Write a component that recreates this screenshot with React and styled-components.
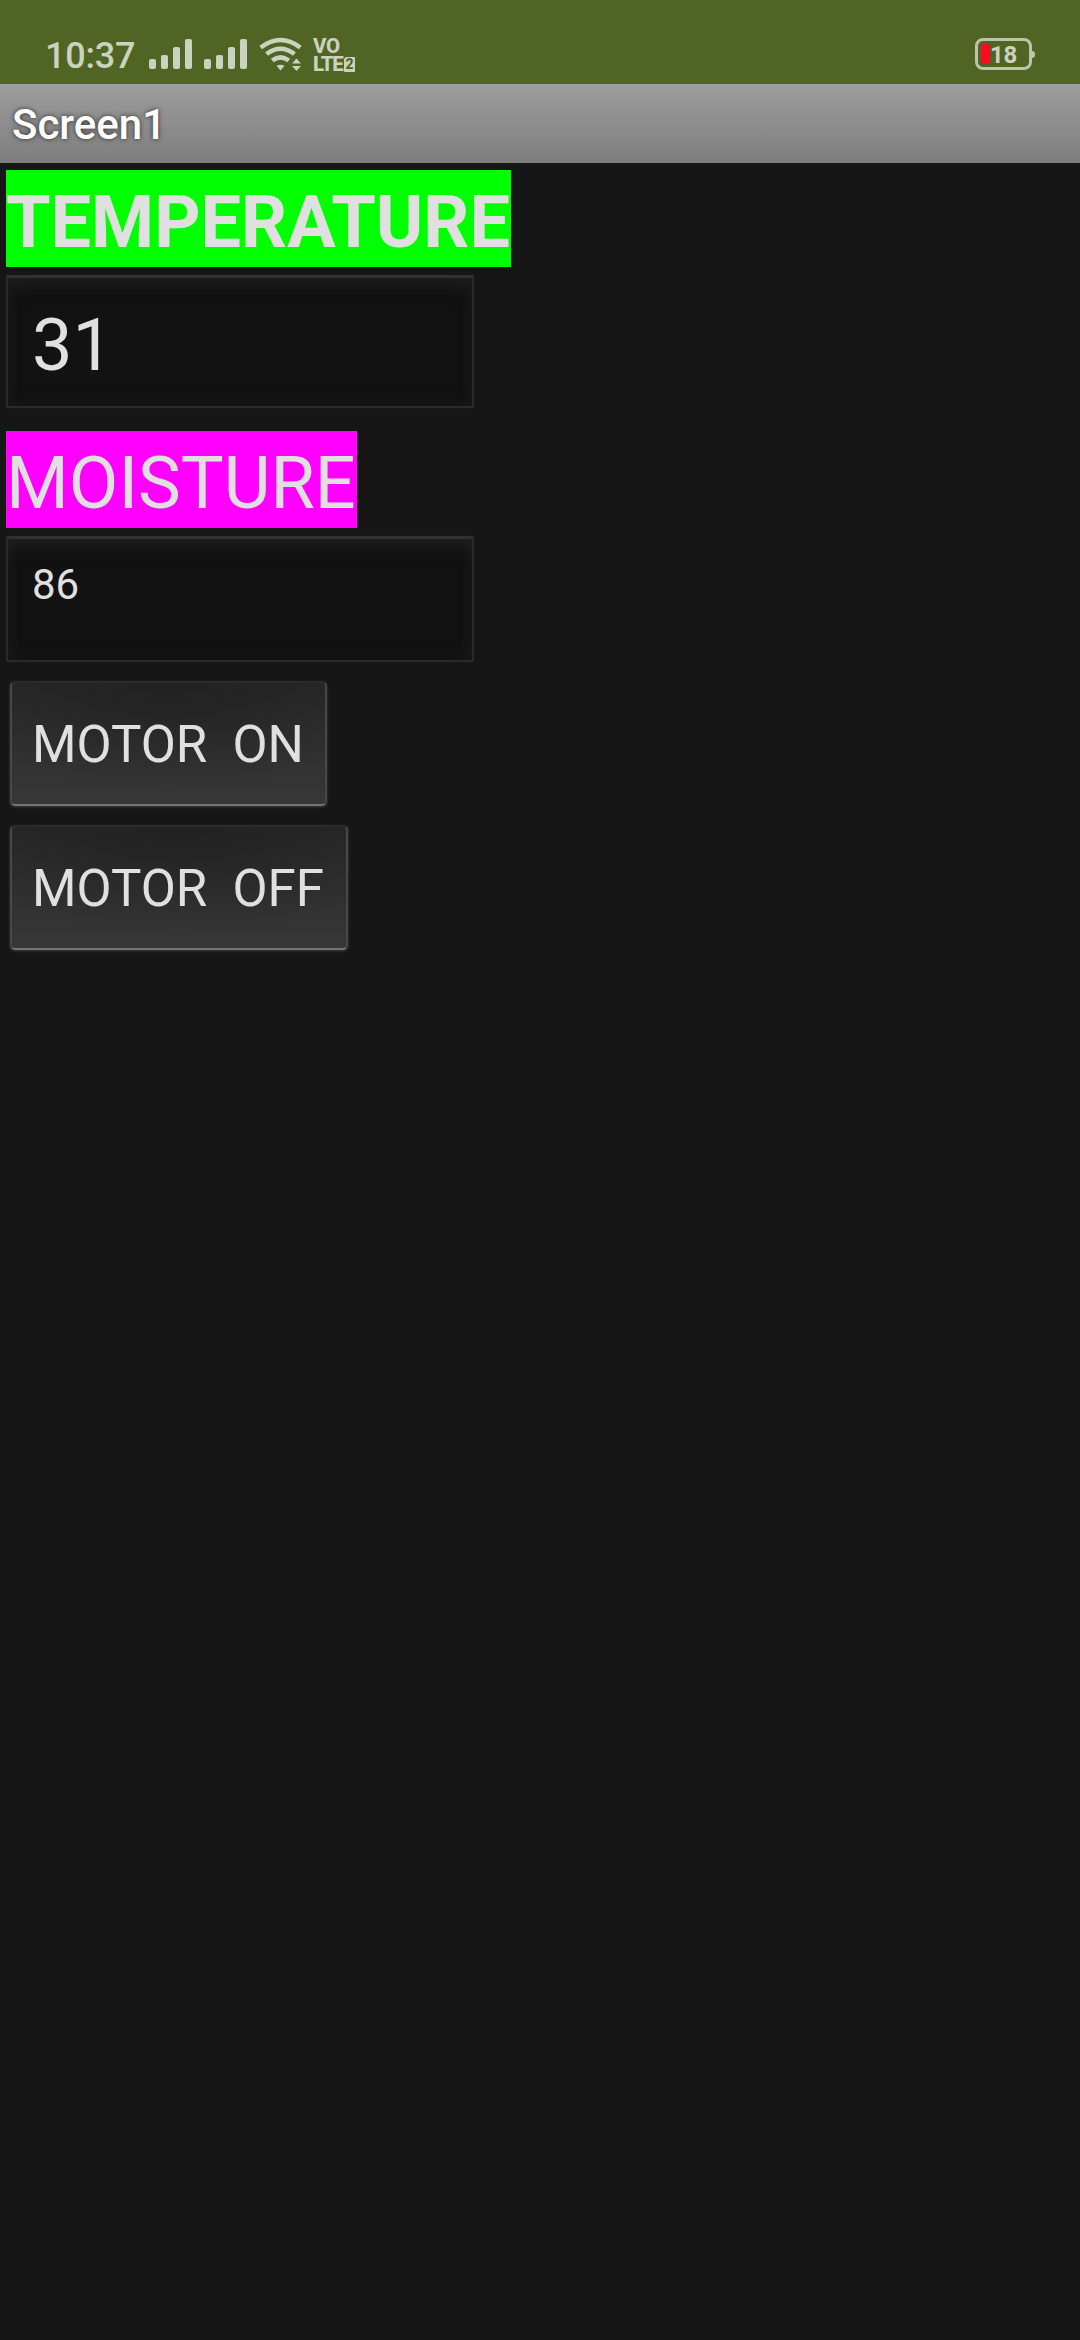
import React from "react";
import styled, { createGlobalStyle } from "styled-components";

const GlobalStyle = createGlobalStyle`
  * { box-sizing: border-box; }
  html, body { margin: 0; background: #161616; }
  body { font-family: Roboto, "Noto Sans", sans-serif; }
`;

const Screen = styled.div`
  display: flex;
  flex-direction: column;
  width: 1080px;
  height: 2340px;
  overflow: hidden;
  background: #161616;
  color: #e0e0e0;
`;

const StatusBar = styled.header`
  display: flex;
  justify-content: space-between;
  align-items: flex-start;
  height: 84px;
  padding: 0 45px;
  background: #506423;
  color: #cbd2bf;
`;

const StatusGroup = styled.div`
  display: flex;
  align-items: flex-start;
`;

const Clock = styled.time`
  width: 104px;
  padding-top: 35px;
  font-size: 36px;
  font-weight: 500;
  line-height: 42px;
  letter-spacing: -0.2px;
  white-space: nowrap;
`;

const StatusIcon = styled.svg`
  display: block;
  flex: none;
  margin-top: ${(p) => p.$top}px;
  margin-right: ${(p) => p.$gap || 0}px;
`;

const VoLte = styled.div`
  display: flex;
  align-items: flex-end;
  height: 35px;
  margin-top: 37px;
`;

const VoLteText = styled.div`
  width: 31px;
  height: 35px;
  font-size: 20.5px;
  font-weight: 800;
  line-height: 18px;
  letter-spacing: -1.2px;

  &::first-line {
    letter-spacing: -0.4px;
  }
`;

const SimBadge = styled.span`
  width: 11px;
  height: 15px;
  border-radius: 3px 1px 1px 1px;
  background: #cbd2bf;
  color: #506423;
  font-size: 14px;
  font-weight: 800;
  line-height: 15px;
  text-align: center;
`;

const Battery = styled.div`
  display: flex;
  align-items: center;
  margin-top: 38px;
`;

const BatteryBody = styled.div`
  display: flex;
  align-items: center;
  width: 57px;
  height: 32px;
  padding-left: 3px;
  border: 3px solid #bcc5aa;
  border-radius: 8px;
`;

const BatteryLevel = styled.div`
  width: 9px;
  height: 20px;
  border-radius: 3px;
  background: #ff0a1e;
`;

const BatteryText = styled.span`
  padding-top: 1px;
  font-size: 24px;
  font-weight: 700;
  line-height: 26px;
  letter-spacing: -0.3px;
`;

const BatteryCap = styled.div`
  width: 3px;
  height: 7px;
  border-radius: 0 3px 3px 0;
  background: #bcc5aa;
`;

const TitleBar = styled.h1`
  height: 79px;
  margin: 0;
  padding: 16px 12px 0;
  background: linear-gradient(#9d9d9d, #7e7e7e);
  color: #fff;
  font-size: 42px;
  font-weight: 500;
  line-height: 49px;
  text-shadow: 0 0 5px rgba(0, 0, 0, 0.7);
`;

const Content = styled.main`
  display: flex;
  flex-direction: column;
  align-items: flex-start;
  padding: 7px 6px;
`;

const Label = styled.label`
  width: ${(p) => p.$width}px;
  height: 97px;
  padding-top: 8px;
  background: ${(p) => p.$color};
  font-size: 72px;
  font-weight: ${(p) => p.$weight};
  line-height: 89px;
  white-space: nowrap;
`;

const Field = styled.input`
  display: block;
  width: 468px;
  height: ${(p) => p.$height}px;
  margin: 8px 0 ${(p) => p.$after}px;
  padding: ${(p) => p.$drop}px 24px ${(p) => p.$lift}px;
  border: 2px solid #2a2a2a;
  border-top: 3px solid #313131;
  border-radius: 1px;
  outline: none;
  background: #121212;
  box-shadow: inset 0 12px 24px -12px #262626, inset 0 0 18px #171717, 0 0 2px #1f1f1f;
  color: #e0e0e0;
  font-family: inherit;
  font-size: ${(p) => p.$size}px;
`;

const MotorButton = styled.button`
  display: block;
  width: ${(p) => p.$width}px;
  height: 125px;
  margin: 0 0 19px 4px;
  padding: 2px 0 0 20px;
  border: 2px solid #484848;
  border-top-color: #2b2b2b;
  border-bottom-color: #747474;
  border-radius: 5px;
  background: radial-gradient(ellipse 75% 90% at 50% 0, rgba(28, 28, 28, 0.6), rgba(40, 40, 40, 0)),
    linear-gradient(#292929, #373737);
  box-shadow: 0 1px 3px #404040;
  color: #e0e0e0;
  font-family: inherit;
  font-size: 51px;
  line-height: 60px;
  text-align: left;
  white-space: pre;
`;

function SignalIcon({ gap }) {
  return (
    <StatusIcon width="43" height="30" viewBox="0 0 43 30" fill="#cbd2bf" $top={39} $gap={gap}>
      <rect x="0" y="20" width="7" height="10" rx="2" />
      <rect x="12" y="16" width="7" height="14" rx="2" />
      <rect x="24" y="8" width="7" height="22" rx="2" />
      <rect x="36" y="0" width="7" height="30" rx="2" />
    </StatusIcon>
  );
}

function WifiIcon() {
  return (
    <StatusIcon width="43" height="34" viewBox="0 0 43 34" $top={37} $gap={11}>
      <g fill="none" stroke="#cbd2bf" strokeWidth="4.6">
        <path d="M1.7 10.5Q21.5-4.5 41.3 10.5" />
        <path d="M7.5 17Q21.5 6.5 35.5 17" />
        <path d="M13.2 23.5Q21.5 17.3 29.8 23.5" />
      </g>
      <g fill="#cbd2bf">
        <path d="M17.5 28.7Q21.5 26.7 25.5 28.7L21.5 33.5Z" />
        <path d="M33 26.5L37.5 21.5L42 26.5Z" />
        <path d="M33 29L37.5 34L42 29Z" />
      </g>
    </StatusIcon>
  );
}

export default function App() {
  return (
    <>
      <GlobalStyle />
      <Screen>
        <StatusBar>
          <StatusGroup>
            <Clock>10:37</Clock>
            <SignalIcon gap={12} />
            <SignalIcon gap={12} />
            <WifiIcon />
            <VoLte>
              <VoLteText>VO<br />LTE</VoLteText>
              <SimBadge>2</SimBadge>
            </VoLte>
          </StatusGroup>
          <Battery>
            <BatteryBody>
              <BatteryLevel />
              <BatteryText>18</BatteryText>
            </BatteryBody>
            <BatteryCap />
          </Battery>
        </StatusBar>
        <TitleBar>Screen1</TitleBar>
        <Content>
          <Label htmlFor="temperature" $color="#00ff00" $width={505} $weight={700}>TEMPERATURE</Label>
          <Field id="temperature" readOnly value="31" $height={133} $size={72} $after={23} $drop={7} $lift={0} />
          <Label htmlFor="moisture" $color="#ff00ff" $width={351} $weight={400}>MOISTURE</Label>
          <Field id="moisture" readOnly value="86" $height={126} $size={42} $after={19} $drop={0} $lift={31} />
          <MotorButton $width={317}>{"MOTOR  ON"}</MotorButton>
          <MotorButton $width={338}>{"MOTOR  OFF"}</MotorButton>
        </Content>
      </Screen>
    </>
  );
}
